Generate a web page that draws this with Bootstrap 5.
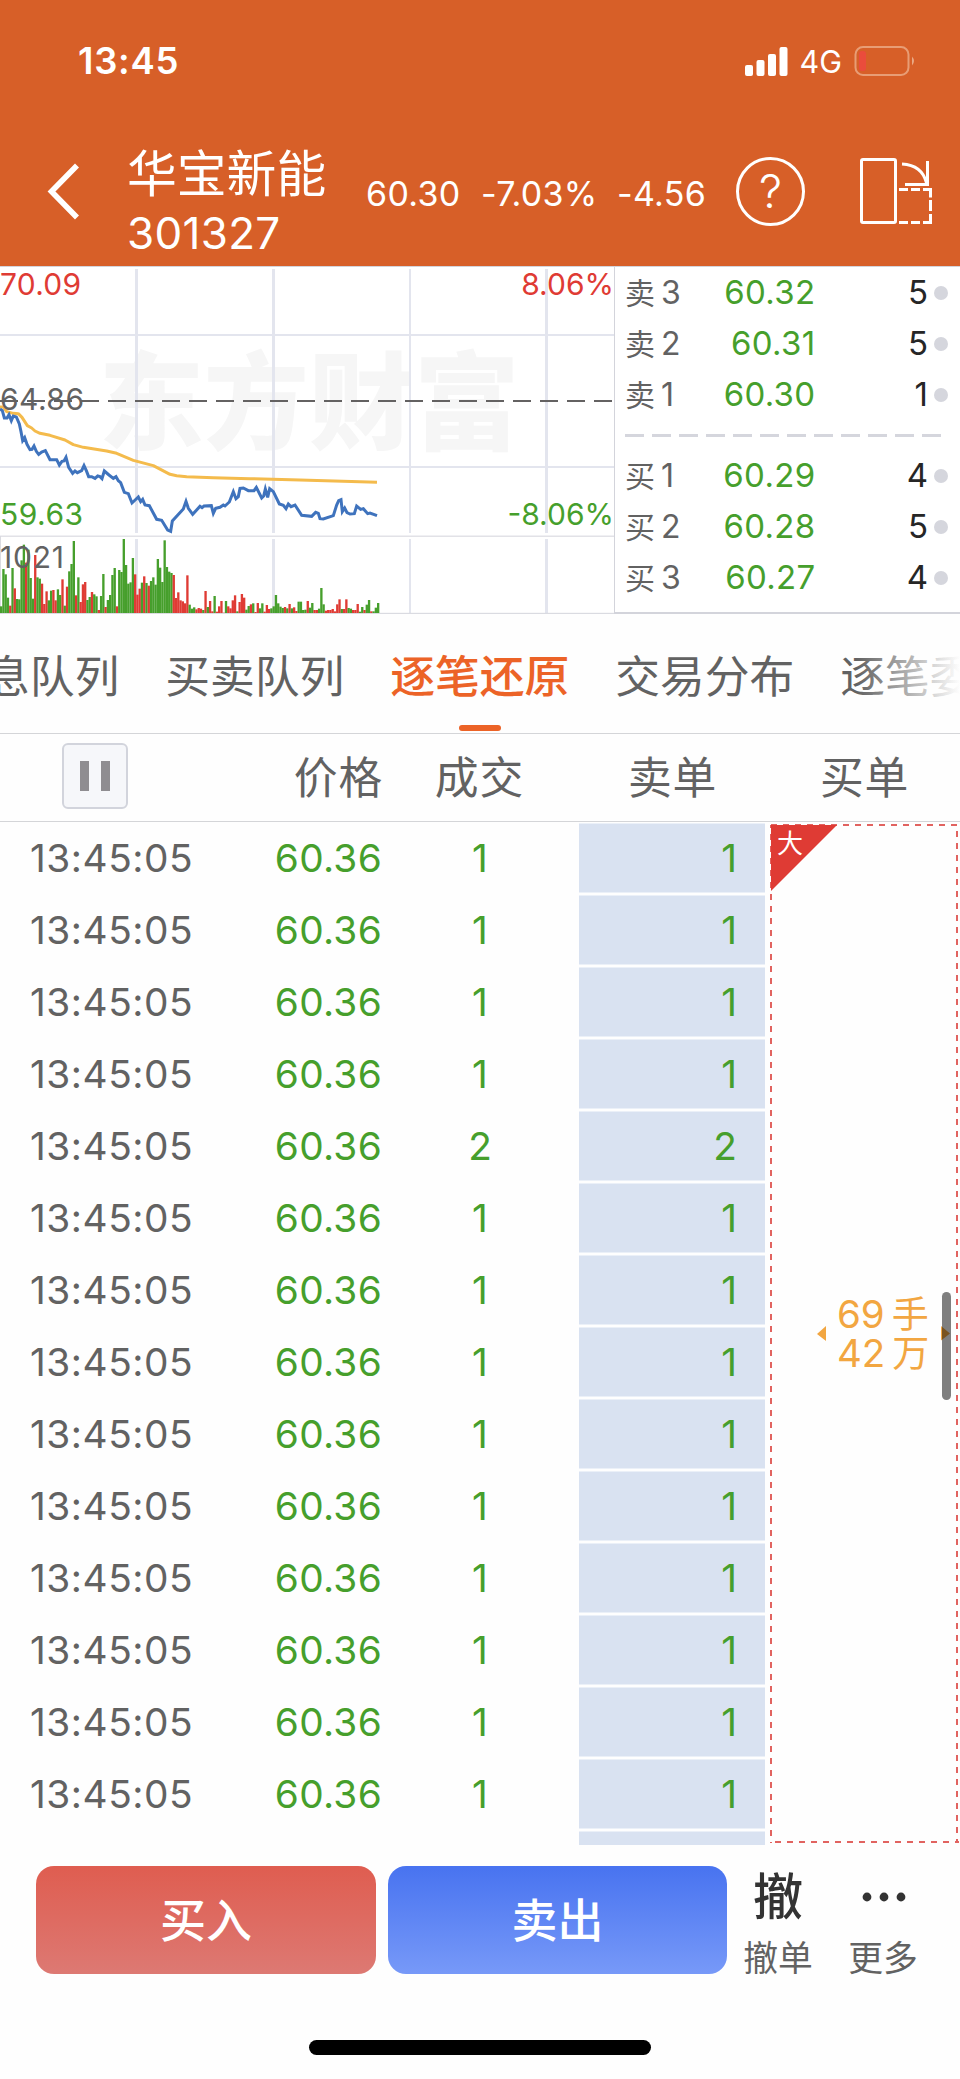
<!DOCTYPE html>
<html lang="zh-CN">
<head>
<meta charset="utf-8">
<meta name="viewport" content="width=device-width, initial-scale=1">
<title>华宝新能 301327</title>
<link href="https://cdn.jsdelivr.net/npm/bootstrap@5.3.0/dist/css/bootstrap.min.css" rel="stylesheet">
<style>
  :root { --up:#df3b34; --down:#469f2c; --ink:#626262; --brand:#d75f28; --accent:#ec6327; --rule:#d3d4db; }
  body { width:960px; height:2079px; overflow:hidden; background:#fefefe; color:var(--ink);
         font-family:Inter,"Noto Sans CJK SC",sans-serif; line-height:1; }
  .c-up { color:var(--up); } .c-down { color:var(--down); }
  svg { display:block; flex:none; }

  .topbar { height:266px; background:var(--brand); color:#fff; }
  .status { height:122px; padding:0 42px 0 78px; }
  .clock { font-size:36.5px; font-weight:600; letter-spacing:.7px; }
  .net { font-size:30.5px; margin:2px 12px 0 12px; }
  .titlebar { height:144px; }
  .back { width:127px; padding-left:47px; }
  .stock { width:239px; padding-top:22px; }
  .stock-name { font-size:49.8px; line-height:60px; }
  .stock-code { font-size:44px; line-height:58px; letter-spacing:.3px; }
  .quote { font-size:34px; letter-spacing:.3px; padding-bottom:1px; }
  .q1 { width:115px; } .q2 { width:136px; } .q3 { width:90px; }
  .tools { padding-bottom:6px; }
  .help { width:69px; height:69px; border:3px solid #fff; font-size:46px; font-weight:300; }

  .market { height:348px; border-top:1px solid var(--rule); background:#fff; }
  .chart { width:615px; height:347px; border-right:1px solid var(--rule); }
  .book { width:345px; border-bottom:2px solid var(--rule); }
  .book-row { height:51px; font-size:33px; padding:0 12px 0 10px; }
  .book-row .side { width:90px; font-size:32px; }
  .book-row .side i { font-style:normal; font-size:30px; margin-right:6px; }
  .book-row .price { width:101px; text-align:right; letter-spacing:.3px; }
  .book-row .qty { width:113px; text-align:right; color:#262626; }
  .book-row .dot { width:14px; height:14px; border-radius:50%; background:#d5d6dd; margin-left:6px; }

  .tabs-strip { height:120px; border-bottom:1px solid #d4d5d8; gap:45.8px; font-size:44.8px; overflow:hidden; padding-top:3px; }
  .tabs-strip::after { content:""; position:absolute; right:0; top:0; width:104px; height:118px; background:linear-gradient(90deg,rgba(254,254,254,0),#fefefe); }
  .tab-item { flex:none; white-space:nowrap; line-height:121px; height:116px; }
  .tab-item:first-child { margin-left:-15px; }
  .tab-item.on { color:var(--accent); font-weight:500; position:relative; }
  .tab-item.on::after { content:""; position:absolute; left:50%; margin-left:-21px; bottom:2px; width:42px; height:6px; border-radius:3px; background:var(--accent); }

  .cols { display:grid; grid-template-columns:191px 191px 141px 56px 186px 195px; align-items:center; }
  .thead-row { height:88px; border-bottom:1px solid #d4d5d8; font-size:43.8px; letter-spacing:.8px; }
  .thead-row .label { padding-top:2px; margin-right:-1px; }
  .thead-row .h-sell { padding-left:49px; } .thead-row .h-buy { padding-left:55px; }
  .pause { width:66px; height:66px; border:2px solid #d2d4dc; border-radius:6px; background:#f6f7fa; gap:12px; margin:0 0 3px 62px; }
  .pause b { width:9px; height:30px; background:#8f8d91; }
  .ticks { height:1023px; overflow:hidden; }
  .tick { height:72px; font-size:38.8px; }
  .tick .time { padding-left:30px; white-space:nowrap; letter-spacing:.55px; }
  .tick .px { text-align:right; letter-spacing:.3px; }
  .tick .lot { padding-left:55px; text-align:center; }
  .tick .sell { height:70px; line-height:68px; background:#d9e2f1; border-top:1px solid #ebf0f8; border-bottom:1px solid #ebf0f8; text-align:right; padding-right:28px; grid-column:5; }
  .order-lane { left:765px; top:0; width:195px; height:1023px; }
  .order-sum { left:72px; top:473px; color:#f2a641; font-size:38.5px; line-height:39px; }
  .order-sum i { font-style:normal; font-size:37px; margin-left:7px; }
  .big-mark { left:12px; top:9px; font-size:26px; color:#fff; }
  .thumb { left:177px; top:470px; width:9px; height:108px; border-radius:4.5px; background:rgba(0,0,0,.5); }

  .actions { height:155px; padding:21px 0 0 36px; }
  .trade { flex:none; height:108px; border:0; border-radius:18px; color:#fff; font-size:46px; font-weight:500; line-height:108px; padding:0; }
  .trade.buy { width:340px; background:linear-gradient(#df5d50,#dd7973); margin-right:12px; }
  .trade.sellout { width:339px; background:linear-gradient(#4873f0,#7799f8); }
  .mini { flex:none; width:102px; font-size:34.8px; text-align:center; }
  .mini + .mini { width:108px; }
  .mini .ico { height:60px; line-height:62px; font-size:50px; font-weight:500; color:#333; }
  .mini .caption-text { line-height:46px; margin-top:9px; white-space:nowrap; }
  .home-bar { width:342px; height:15px; border-radius:8px; background:#000; margin:40px auto 0; }
</style>
</head>
<body>
<header class="topbar">
  <div class="status d-flex align-items-center">
    <span class="clock me-auto">13:45</span>
    <svg width="43" height="30" viewBox="0 0 43 30" fill="#fff"><rect x="0" y="19" width="8" height="11" rx="2"/><rect x="11.500" y="14" width="8" height="16" rx="2"/><rect x="23" y="8" width="8" height="22" rx="2"/><rect x="34.500" y="1" width="8" height="29" rx="2"/></svg>
    <span class="net">4G</span>
    <svg width="64" height="30" viewBox="0 0 64 30"><rect x="1.500" y="1" width="53" height="28" rx="7.500" fill="none" stroke="#e89d75" stroke-width="2"/><rect x="5" y="5" width="7" height="20" rx="3" fill="#ea4c3c"/><path d="M58 10.500q4 4.500 0 9z" fill="#eaa985"/></svg>
  </div>
  <div class="titlebar d-flex">
    <div class="back"><svg width="34" height="140" viewBox="0 0 34 140"><path d="M30 43.500 4.500 69.500l25.500 26" fill="none" stroke="#fff" stroke-width="5.600"/></svg></div>
    <div class="stock"><div class="stock-name">华宝新能</div><div class="stock-code">301327</div></div>
    <div class="quote d-flex align-items-center"><span class="q1">60.30</span><span class="q2">-7.03%</span><span class="q3">-4.56</span></div>
    <div class="tools d-flex align-items-center ms-auto">
      <div class="help rounded-circle d-flex align-items-center justify-content-center">?</div>
      <svg width="155" height="70" viewBox="0 0 155 70" fill="none" stroke="#fff" stroke-width="3"><rect x="56.500" y="3.500" width="34" height="63" rx="1.500"/><path d="M97 8q20 1 24.500 19M122.500 5v23.500H100M94 33.500h9M106 33.500h9M118 33.500h7.500v8M125.500 44v11M125.500 58v8.500H118M115 66.500h-9M103 66.500h-9"/></svg>
    </div>
  </div>
</header>

<section class="market d-flex">
  <div class="chart">
    <svg width="614" height="347" viewBox="0 21 1842 1041" preserveAspectRatio="none">
      <text x="296" y="543" font-family="Noto Sans CJK SC" font-weight="900" font-size="316" textLength="1262" lengthAdjust="spacingAndGlyphs" fill="#f6f6f6">东方财富</text>
      <g fill="#e3e5ee">
        <path d="M405 27h9v792h-9zM816 27h9v792h-9zM1227 27h6v792h-6zM1635 27h9v792h-9z"/>
        <path d="M405 837h9v222h-9zM816 837h9v222h-9zM1227 837h6v222h-6zM1635 837h9v222h-9z"/>
        <path d="M0 222h1842v6H0zM0 618h1842v6H0z"/>
      </g>
      <path d="M0 828.500h1842M0 1060h1842M1 829v231" stroke="#d3d4db" stroke-width="3"/>
      <g id="volume"></g>
      <path d="M0 423h1836" stroke="#646262" stroke-width="6" stroke-dasharray="54 27"/>
      <polyline fill="none" stroke="#f4bb4c" stroke-width="9" stroke-linejoin="round" points="0,441 10,441 20,455 40,460 55,461 66,472 82,497 95,504 105,513 120,520 150,526 195,540 220,554 250,562 320,573 350,580 400,601 460,617 510,643 530,647 560,650 640,653 750,656 900,660 1131,667"/>
      <polyline fill="none" stroke="#3f73bd" stroke-width="9" stroke-linejoin="miter" points="0,447 7,452 13,474 21,474 27,464 34,482 40,468 49,471 58,492 63,515 68,542 74,533 81,553 90,569 96,568 102,558 109,574 116,583 125,576 136,572 150,599 170,599 178,615 186,604 192,603 198,592 206,622 218,640 225,633 232,638 245,632 252,617 259,632 266,650 275,650 285,655 293,648 300,650 306,656 313,633 327,645 340,655 348,650 355,662 362,668 373,697 385,701 396,729 415,711 422,725 428,718 435,735 448,737 470,778 485,781 503,810 512,814 517,783 550,747 558,724 565,745 578,763 600,739 606,743 612,738 634,737 640,760 647,745 660,742 670,735 675,738 688,726 700,695 708,716 715,710 720,685 730,684 745,692 762,692 769,682 785,714 791,708 796,687 803,712 809,686 820,695 838,732 850,736 858,746 865,732 873,740 885,735 905,766 935,769 947,757 955,760 960,776 970,777 1000,767 1010,735 1016,722 1023,719 1027,755 1034,744 1041,758 1050,762 1063,761 1070,738 1082,748 1090,746 1103,761 1110,759 1123,764 1131,767"/>
      <g font-family="Inter" font-size="90">
        <text x="0" y="105" textLength="243" fill="#df3b34">70.09</text>
        <text x="0" y="449" textLength="252" fill="#626262">64.86</text>
        <text x="0" y="796" textLength="249" fill="#469f2c">59.63</text>
        <text x="0" y="924" textLength="192" fill="#626262">1021</text>
        <text x="1842" y="105" text-anchor="end" fill="#df3b34">8.06%</text>
        <text x="1842" y="796" text-anchor="end" fill="#469f2c">-8.06%</text>
      </g>
    </svg>
  </div>
  <div class="book">
    <div id="asks"></div>
    <svg width="345" height="30" viewBox="0 0 345 30"><path d="M10 15.500h320" stroke="#d5d6dd" stroke-width="3" stroke-dasharray="19 8"/></svg>
    <div id="bids"></div>
  </div>
</section>

<nav class="tabs-strip d-flex position-relative">
  <span class="tab-item">息队列</span><span class="tab-item">买卖队列</span><span class="tab-item on">逐笔还原</span><span class="tab-item">交易分布</span><span class="tab-item">逐笔委</span>
</nav>

<div class="thead-row cols">
  <div class="pause d-flex align-items-center justify-content-center"><b></b><b></b></div>
  <div class="label text-end">价格</div>
  <div class="label text-end">成交</div>
  <div></div>
  <div class="label h-sell">卖单</div>
  <div class="label h-buy">买单</div>
</div>

<main class="ticks position-relative">
  <div id="rows"></div>
  <div class="order-lane position-absolute">
    <svg width="195" height="1023" viewBox="0 0 195 1023">
      <path d="M6 3v1018" stroke="#e16360" stroke-width="2" stroke-dasharray="6 6" stroke-dashoffset="3"/>
      <path d="M6 3h188M10 1020h184M192 9v1012" fill="none" stroke="#e16360" stroke-width="2" stroke-dasharray="6 6"/>
      <path d="M6 3h66L6 69z" fill="#df3b34"/>
      <path d="M52 512l9-8v15zM176 504l9 7.500-9 7z" fill="#f2a641"/>
    </svg>
    <span class="big-mark position-absolute">大</span>
    <div class="order-sum position-absolute"><div>69<i>手</i></div><div>42<i>万</i></div></div>
    <div class="thumb position-absolute"></div>
  </div>
</main>

<footer>
  <div class="actions d-flex">
    <button class="trade buy">买入</button>
    <button class="trade sellout">卖出</button>
    <div class="mini"><div class="ico">撤</div><div class="caption-text">撤单</div></div>
    <div class="mini"><div class="ico"><svg class="mx-auto" width="105" height="60" viewBox="0 0 105 60" fill="#333"><circle cx="36" cy="31" r="4.400"/><circle cx="53" cy="31" r="4.400"/><circle cx="70" cy="31" r="4.400"/></svg></div><div class="caption-text">更多</div></div>
  </div>
  <div class="home-bar"></div>
</footer>

<script>
  // One bar per minute: height, followed by the direction (g = down, r = up).
  const volume = '20g 132g 116g 46g 22r 135g 74r 42g 41g 158g 205g 151r 190g 105g 43g 174r 107g 103g 88r 27r 65r 38g 67g 69r 38r 71g 54g 101r 22g 79r 125g 147g 216g 53r 107g 33r 86r 93r 39g 48g 63r 56g 50g 9r 51g 117g 18r 39g 54g 114g 135g 20r 129g 123g 222g 144g 88g 92g 165g 116r 55r 73r 91g 110r 90g 82r 96g 107g 85g 162g 136g 93g 218g 138g 124g 120g 114r 45r 62r 38r 35r 29r 113r 25g 13g 17g 11r 15r 13r 9g 66r 18g 36r 5r 51g 4r 20r 36r 1r 36g 20r 14r 38r 53r 5g 33r 57r 46r 10g 21g 26r 29g 3r 30r 14g 29g 4r 24r 12r 14g 20g 54g 29g 19g 15g 18r 14g 27r 14g 17r 6r 34g 34g 9g 10g 36r 16g 30g 9r 9r 13g 75g 26g 7r 9r 9r 12r 5r 26r 41r 12g 12r 41r 15g 13g 9r 9r 27r 4g 18g 9r 25g 39g 5r 5g 16g 30g'.split(' ');
  const step = 6.813;
  document.getElementById('volume').innerHTML = volume.map((v, i) => {
    const h = parseInt(v);
    return `<rect x="${(i * step).toFixed(1)}" y="${1059 - h}" width="7" height="${h}" fill="${v.endsWith('g') ? '#469f2c' : '#df3b34'}"/>`;
  }).join('');

  const level = ([s, n, p, q]) => `<div class="book-row d-flex align-items-center"><span class="side"><i>${s}</i>${n}</span><span class="price c-down">${p}</span><span class="qty">${q}</span><span class="dot"></span></div>`;
  document.getElementById('asks').innerHTML = [['卖',3,'60.32',5],['卖',2,'60.31',5],['卖',1,'60.30',1]].map(level).join('');
  document.getElementById('bids').innerHTML = [['买',1,'60.29',4],['买',2,'60.28',5],['买',3,'60.27',4]].map(level).join('');

  const lots = [1,1,1,1,2,1,1,1,1,1,1,1,1,1];
  document.getElementById('rows').innerHTML = lots.map(n =>
    `<div class="tick cols"><span class="time">13:45:05</span><span class="px c-down">60.36</span><span class="lot c-down">${n}</span><span class="sell c-down">${n}</span></div>`
  ).join('') + '<div class="tick cols"><span class="sell"></span></div>';
</script>
<script src="https://cdn.jsdelivr.net/npm/bootstrap@5.3.0/dist/js/bootstrap.bundle.min.js"></script>
</body>
</html>
